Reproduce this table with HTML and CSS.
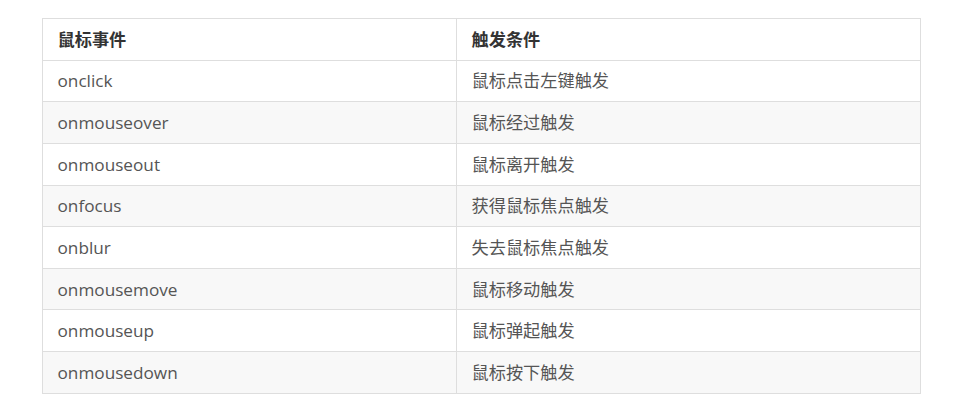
FILE: index.html
```html
<!DOCTYPE html>
<html lang="zh">
<head>
<meta charset="utf-8">
<link rel="stylesheet" href="styles.css">
</head>
<body>
<div class="page">
<table class="events">
  <thead>
    <tr><th class="c1">鼠标事件</th><th>触发条件</th></tr>
  </thead>
  <tbody>
    <tr><td>onclick</td><td>鼠标点击左键触发</td></tr>
    <tr><td>onmouseover</td><td>鼠标经过触发</td></tr>
    <tr><td>onmouseout</td><td>鼠标离开触发</td></tr>
    <tr><td>onfocus</td><td>获得鼠标焦点触发</td></tr>
    <tr><td>onblur</td><td>失去鼠标焦点触发</td></tr>
    <tr><td>onmousemove</td><td>鼠标移动触发</td></tr>
    <tr><td>onmouseup</td><td>鼠标弹起触发</td></tr>
    <tr><td>onmousedown</td><td>鼠标按下触发</td></tr>
  </tbody>
</table>
</div>
</body>
</html>
```
FILE: styles.css
```css
html, body {
  margin: 0;
  padding: 0;
  background: #ffffff;
}
.page {
  padding: 18px 0 0 42px;
}
.events {
  width: 879px;
  border-collapse: collapse;
  font-family: "Open Sans", "Noto Sans CJK SC", sans-serif;
  font-size: 17.2px;
  color: #555555;
  table-layout: fixed;
}
.events th, .events td {
  border: 1.5px solid #dedede;
  padding: 0 0 0 14.5px;
  height: 40.65px;
  text-align: left;
  vertical-align: middle;
  line-height: 1;
}
.events th {
  font-weight: 700;
  color: #333333;
}
.events .c1 {
  width: 398.5px;
}
.events tbody tr:nth-child(even) {
  background: #f8f8f8;
}
```
